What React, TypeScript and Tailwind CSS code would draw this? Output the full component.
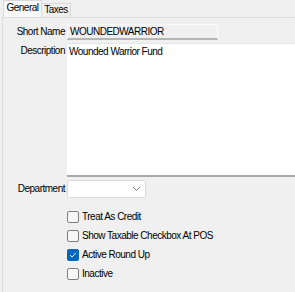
import { useState } from 'react'

const OPTIONS = [
  { key: 'credit', label: 'Treat As Credit' },
  { key: 'taxable', label: 'Show Taxable Checkbox At POS' },
  { key: 'roundUp', label: 'Active Round Up' },
  { key: 'inactive', label: 'Inactive' },
]

function Check({ checked, label, onToggle }: { checked: boolean; label: string; onToggle: () => void }) {
  return (
    <label className="flex h-[19px] items-center gap-[3px] cursor-default" onClick={onToggle}>
      {checked ? (
        <span className="flex h-[12px] w-[12px] items-center justify-center rounded-[2px] bg-[#0067c0]">
          <svg width="8" height="8" viewBox="0 0 8 8" fill="none">
            <path d="M1.2 4.2 L3.1 6 L6.8 1.8" stroke="white" strokeWidth="1" />
          </svg>
        </span>
      ) : (
        <span className="h-[12px] w-[12px] rounded-[2px] border border-[#7f7f7f] bg-[#f7f7f7]" />
      )}
      <span>{label}</span>
    </label>
  )
}

export default function App() {
  const [tab, setTab] = useState<'general' | 'taxes'>('general')
  const [flags, setFlags] = useState<Record<string, boolean>>({
    credit: false,
    taxable: false,
    roundUp: true,
    inactive: false,
  })

  return (
    <div
      className="h-[292px] w-[295px] overflow-hidden bg-[#f0f0f0] text-[10px] leading-none tracking-[-0.5px] text-black"
      style={{ fontFamily: '"Liberation Sans", Arial, sans-serif' }}
    >
      {/* Tabs */}
      <div className="flex h-[17px] items-end pl-[3px]">
        <button
          onClick={() => setTab('general')}
          className={`h-[17px] w-[39px] border border-b-0 border-[#d9d9d9] pb-[2px] ${tab === 'general' ? 'bg-[#f9f9f9]' : 'bg-[#f0f0f0]'}`}
        >
          General
        </button>
        <button
          onClick={() => setTab('taxes')}
          className="h-[14px] w-[29px] border border-b-0 border-l-0 border-[#d9d9d9] bg-[#f0f0f0] pb-[1px]"
        >
          Taxes
        </button>
      </div>

      {/* Panel */}
      <div className="ml-[2px] h-[275px] border-l border-t border-[#dcdcdc] bg-[#f0f0f0] pt-[6px]">
        <div className="flex items-center">
          <span className="w-[62px] text-right">Short Name</span>
          <div className="ml-[2px] flex h-[16px] w-[151px] items-center border border-[#fbfbfb] border-b-2 border-b-[#b5b5b5] bg-[#f0f0f0] pl-[2px]">
            WOUNDEDWARRIOR
          </div>
        </div>

        <div className="mt-[3px] flex">
          <span className="mt-[3px] w-[62px] text-right">Description</span>
          <div className="ml-[2px] h-[134px] flex-1 border-t border-[#e6e6e6] border-b-2 border-b-[#a8a8a8] bg-white pl-[2px] pt-[3px]">
            Wounded Warrior Fund
          </div>
        </div>

        <div className="mt-[3px] flex items-center">
          <span className="w-[62px] text-right">Department</span>
          <div className="ml-[2px] flex h-[18px] w-[79px] items-center justify-end rounded-[2px] border border-[#dadada] bg-white pr-[4px]">
            <svg width="9" height="6" viewBox="0 0 9 6" fill="none">
              <path d="M1 1 L4.5 4.5 L8 1" stroke="#7a7a7a" strokeWidth="1" />
            </svg>
          </div>
        </div>

        <div className="ml-[64px] mt-[9px] flex flex-col">
          {OPTIONS.map(o => (
            <Check
              key={o.key}
              label={o.label}
              checked={flags[o.key]}
              onToggle={() => setFlags(prev => ({ ...prev, [o.key]: !prev[o.key] }))}
            />
          ))}
        </div>
      </div>
    </div>
  )
}
